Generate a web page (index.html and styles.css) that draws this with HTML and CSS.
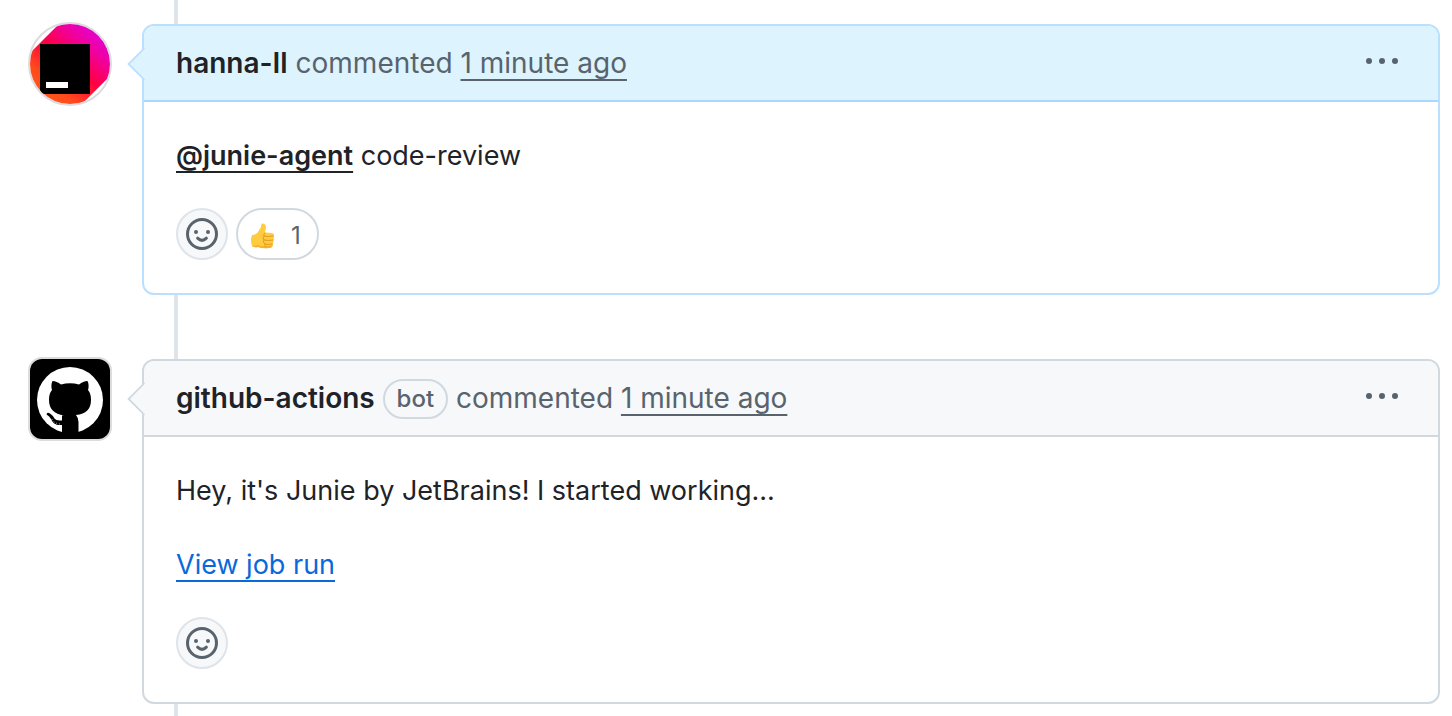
FILE: index.html
```html
<!DOCTYPE html>
<html lang="en">
<head>
  <meta charset="UTF-8" />
  <meta name="viewport" content="width=device-width, initial-scale=1.0" />
  <title>Conversation</title>
  <link rel="stylesheet" href="styles.css">
</head>
<body>
  <main class="timeline">
    <article class="timeline-item">
      <a class="avatar avatar-user" href="#" aria-label="hanna-Il">
        <svg viewBox="0 0 80 80" aria-hidden="true">
          <defs>
            <linearGradient id="brand" x1="14" y1="76" x2="72" y2="8" gradientUnits="userSpaceOnUse">
              <stop offset="0" stop-color="#ff5a1a" />
              <stop offset="0.2" stop-color="#ff4a1c" />
              <stop offset="0.5" stop-color="#ff0040" />
              <stop offset="0.78" stop-color="#f000a0" />
              <stop offset="1" stop-color="#e000d8" />
            </linearGradient>
          </defs>
          <path fill="url(#brand)" d="M0 29 27 2q3-2 8-2h45v52L56 76q-4 4-9 4H0z" />
          <path d="M10 20h50v50H10z" />
          <path fill="#fff" d="M16 58h22v6H16z" />
        </svg>
      </a>
      <section class="comment comment-own">
        <header class="comment-header">
          <h3 class="comment-title">
            <a class="author" href="#">hanna-Il</a>
            commented
            <a class="timestamp" href="#">1 minute ago</a>
          </h3>
          <button class="menu-button" type="button" aria-label="Show options">
            <svg viewBox="0 0 32 32" aria-hidden="true">
              <circle cx="3" cy="16" r="3" /><circle cx="16" cy="16" r="3" /><circle cx="29" cy="16" r="3" />
            </svg>
          </button>
        </header>
        <div class="comment-body">
          <p><a class="mention" href="#">@junie-agent</a> code-review</p>
        </div>
        <div class="reactions">
          <button class="reaction-add" type="button" aria-label="Add reaction">
            <svg viewBox="0 0 16 16" aria-hidden="true">
              <path d="M8 0a8 8 0 1 1 0 16A8 8 0 0 1 8 0ZM1.5 8a6.5 6.5 0 1 0 13 0 6.5 6.5 0 0 0-13 0Z" />
              <circle cx="5" cy="7" r="1" /><circle cx="11" cy="7" r="1" />
              <path class="smile" d="M5.800 10.100Q8 12.200 10.200 10.100" />
            </svg>
          </button>
          <button class="reaction" type="button" aria-label="1 thumbs up">
            <svg viewBox="0 0 24 26" aria-hidden="true">
              <path fill="#ffcb40" d="M1 12q4 0 6-3l3-5q0-4 2-3.500 3 .5 3 4l-1 5 7 .500q2.500.5 2 3l-1 9q-1 3-4 3-7 .5-11-1Q3 25 1 23-1 17 1 12z" />
              <path fill="#f7b02e" d="M1 23q3 2 6 1 5 2 11 1 3 0 4-3-2 1-6 1-6 1-9-1-3 1-6 1z" />
              <path fill="none" stroke="#e39a1c" stroke-linecap="round" d="M14 10q-2 1-1 3 4 1 9 0M13 13q-2 2 0 4 4 1 9 0M13 17q-2 2 1 4 3 1 7 0M14 21q-1 2 1 3" />
            </svg>
            <span>1</span>
          </button>
        </div>
      </section>
    </article>

    <article class="timeline-item">
      <a class="avatar avatar-bot" href="#" aria-label="github-actions">
        <svg viewBox="0 0 80 80" aria-hidden="true">
          <path d="M0 0h80v80H0z" />
          <circle cx="40" cy="41" r="33" fill="#fff" />
          <path d="M22.500 22C25.500 22 28 23.500 31 25.500Q40 23 49 25.500C52 23.500 54.500 22 57.500 22Q59.500 26 58 31C60.500 34 61 37 61 41C61 50 56 55 46 56Q48.500 59 48.500 63V76H32V56.500H34C24 55 19 50 19 41C19 37 19.500 34 22 31Q20.500 26 22.500 22z" />
          <path d="M32 66C25 66.500 23 64 21 60Q19.500 57 16.500 55.500Q17 52.500 20 54.500Q23 56.500 24.500 59.500Q26.500 62.500 34 61V66z" />
          <path fill="none" stroke="#bbb" stroke-dasharray="1 2" d="M22 60Q24 65 31 65" />
        </svg>
      </a>
      <section class="comment">
        <header class="comment-header">
          <h3 class="comment-title">
            <a class="author" href="#">github-actions</a>
            <span class="label">bot</span>
            commented
            <a class="timestamp" href="#">1 minute ago</a>
          </h3>
          <button class="menu-button" type="button" aria-label="Show options">
            <svg viewBox="0 0 32 32" aria-hidden="true">
              <circle cx="3" cy="16" r="3" /><circle cx="16" cy="16" r="3" /><circle cx="29" cy="16" r="3" />
            </svg>
          </button>
        </header>
        <div class="comment-body">
          <p>Hey, it's Junie by JetBrains! I started working...</p>
          <p><a class="link" href="#">View job run</a></p>
        </div>
        <div class="reactions">
          <button class="reaction-add" type="button" aria-label="Add reaction">
            <svg viewBox="0 0 16 16" aria-hidden="true">
              <path d="M8 0a8 8 0 1 1 0 16A8 8 0 0 1 8 0ZM1.5 8a6.5 6.5 0 1 0 13 0 6.5 6.5 0 0 0-13 0Z" />
              <circle cx="5" cy="7" r="1" /><circle cx="11" cy="7" r="1" />
              <path class="smile" d="M5.800 10.100Q8 12.200 10.200 10.100" />
            </svg>
          </button>
        </div>
      </section>
    </article>
  </main>
</body>
</html>
```

FILE: styles.css
```css
* {
  box-sizing: border-box;
}

body {
  margin: 0;
  background: #fff;
  color: #1f2328;
  font-family: Inter, "Liberation Sans", sans-serif;
  font-size: 27px;
  line-height: 42px;
}

a {
  color: inherit;
  text-decoration: none;
}

button {
  border: 0;
  padding: 0;
  background: none;
  color: #59636e;
  font: inherit;
  cursor: pointer;
}

svg {
  display: block;
  fill: currentColor;
}

/* The vertical rule that runs behind the comments */
.timeline {
  display: flex;
  flex-direction: column;
  gap: 64px;
  padding: 24px 12px 12px 28px;
  background: linear-gradient(#dfe3ea, #dfe3ea) 174px 0 / 4px 100% no-repeat;
}

.timeline-item {
  display: flex;
  align-items: flex-start;
  gap: 30px;
}

.avatar {
  flex: none;
  width: 84px;
  height: 84px;
  margin-top: -2px;
  border: 2px solid #dcdcde;
  color: #000;
  overflow: hidden;
}

.avatar svg {
  width: 80px;
  height: 80px;
}

.avatar-user {
  border-radius: 50%;
}

.avatar-bot {
  border-radius: 14px;
}

.comment {
  --border: #d1d9e0;
  --header: #f6f8fa;
  position: relative;
  flex: 1;
  min-width: 0;
  border: 2px solid var(--border);
  border-radius: 12px;
  background: #fff;
}

.comment-own {
  --border: #bbdfff;
  --header: #ddf4ff;
}

/* Arrow that points at the avatar */
.comment::before {
  content: '';
  position: absolute;
  top: 26px;
  left: -12px;
  width: 22px;
  height: 22px;
  border: solid var(--border);
  border-width: 0 0 2px 2px;
  background: var(--header);
  transform: rotate(45deg);
  clip-path: polygon(0 0, 1px 0, 100% calc(100% - 1px), 100% 100%, 0 100%);
}

.comment-header {
  display: flex;
  align-items: flex-start;
  justify-content: space-between;
  padding: 16px 40px 16px 32px;
  border-bottom: 2px solid var(--border);
  border-radius: 10px 10px 0 0;
  background: var(--header);
}

.comment-own .comment-header {
  border-bottom-color: #a8d8ff;
}

.comment-title {
  margin: 0;
  color: #59636e;
  font-size: 28px;
  font-weight: 400;
}

.author,
.mention {
  color: #1f2328;
  font-weight: 600;
}

.timestamp,
.mention,
.link {
  text-decoration: underline;
  text-decoration-thickness: 2px;
  text-underline-offset: 6px;
}

.link {
  color: #0969da;
}

.label {
  display: inline-block;
  padding: 0 12px;
  border: 2px solid #d1d9e0;
  border-radius: 20px;
  font-size: 24px;
  font-weight: 500;
  line-height: 36px;
  vertical-align: 1px;
}

.menu-button svg {
  width: 32px;
  height: 38px;
}

.comment-body {
  display: grid;
  gap: 32px;
  padding: 33px 32px 31px;
}

.comment-body p {
  margin: 0;
}

.reactions {
  display: flex;
  gap: 8px;
  padding: 0 32px 33px;
}

.reaction-add,
.reaction {
  display: flex;
  align-items: center;
  justify-content: center;
  height: 52px;
  border: 2px solid #d1d9e0;
  border-radius: 26px;
}

.reaction-add {
  width: 52px;
  border-color: #dfe4ea;
  background: #f6f8fa;
}

.reaction-add svg {
  width: 32px;
  height: 32px;
}

.smile {
  fill: none;
  stroke: currentColor;
  stroke-width: 1.5;
  stroke-linecap: round;
}

.reaction {
  gap: 16px;
  padding: 4px 16px 0 13px;
  font-size: 24px;
}

.reaction svg {
  width: 24px;
  height: 26px;
}
```
